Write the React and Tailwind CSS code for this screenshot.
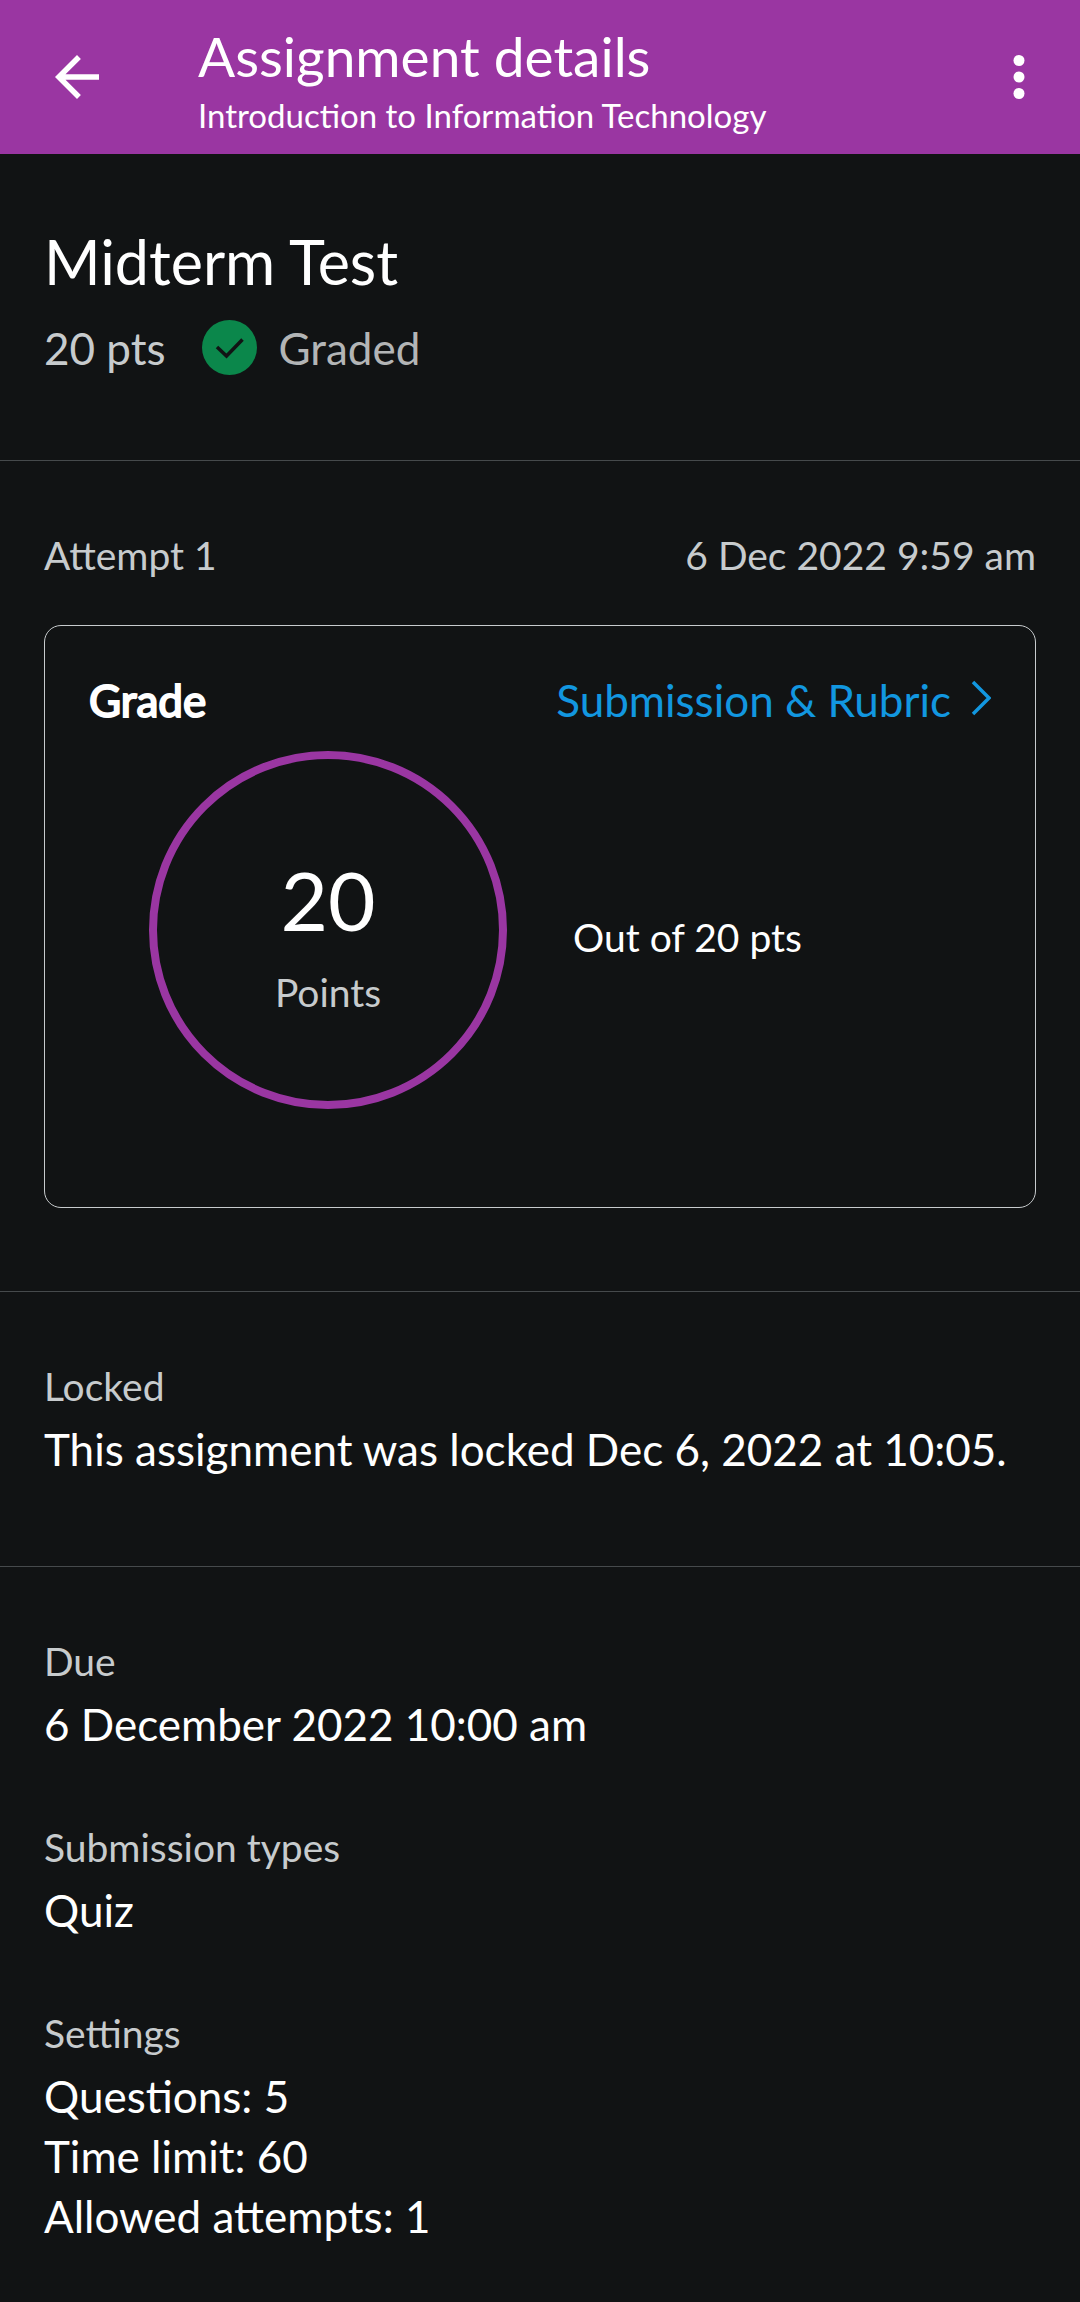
function Section({ className = "", children }) {
  return (
    <section className={`border-b border-[#464a4c] px-11 ${className}`}>
      {children}
    </section>
  );
}

function Field({ label, lines }) {
  return (
    <div className="flex flex-col gap-[10px]">
      <dt className="text-[39px] leading-[46px] text-[#c7cbcd]">{label}</dt>
      <dd className="text-[44px] leading-[60px] text-white">
        {lines.map((line) => (
          <p key={line}>{line}</p>
        ))}
      </dd>
    </div>
  );
}

export default function App() {
  return (
    <div className="min-h-screen bg-[#111314] font-['Lato',sans-serif] text-white">
      <header className="flex items-start bg-[#9a36a2] pr-7 pl-11">
        <button type="button" aria-label="Back" className="my-11 size-[66px] shrink-0">
          <svg viewBox="0 0 24 24" className="size-full" fill="currentColor" aria-hidden="true">
            <path d="M20 11H7.83l5.59-5.59L12 4l-8 8 8 8 1.41-1.41L7.83 13H20v-2z" />
          </svg>
        </button>
        <div className="ml-[88px] min-w-0 flex-1 pt-[23px]">
          <h1 className="text-[55px] leading-[66px]">Assignment details</h1>
          <p className="text-[33px] leading-[52px]">Introduction to Information Technology</p>
        </div>
        <button type="button" aria-label="More options" className="my-11 size-[66px] shrink-0">
          <svg viewBox="0 0 24 24" className="size-full" fill="currentColor" aria-hidden="true">
            <circle cx="12" cy="6" r="2" />
            <circle cx="12" cy="12" r="2" />
            <circle cx="12" cy="18" r="2" />
          </svg>
        </button>
      </header>

      <main>
        <Section className="pt-[72px] pb-[82px]">
          <h2 className="text-[61px] leading-[72px]">Midterm Test</h2>
          <div className="mt-5 flex items-center text-[44px] leading-[60px]">
            <span className="text-[#c7cbcd]">20 pts</span>
            <svg viewBox="0 0 55 55" className="mb-0.5 ml-9 size-[55px]" aria-hidden="true">
              <circle cx="27.5" cy="27.5" r="27.5" fill="#0b874b" />
              <path d="M15 27l9.5 9L40.500 19.500" fill="none" stroke="#111314" strokeWidth="3.5" />
            </svg>
            <span className="ml-[22px] text-[#b3b5b6]">Graded</span>
          </div>
        </Section>

        <Section className="pt-[71px] pb-[83px]">
          <div className="flex justify-between text-[39px] leading-[46px] text-[#c7cbcd]">
            <span>Attempt 1</span>
            <time dateTime="2022-12-06T09:59">6 Dec 2022 9:59 am</time>
          </div>

          <article className="mt-[47px] rounded-[17px] border border-[#c7cbcd] px-11 pt-11 pb-[98px]">
            <div className="flex justify-between text-[44px] leading-[60px]">
              <h3 className="[-webkit-text-stroke:2px_white]">Grade</h3>
              <a href="#submission" className="flex items-center gap-5 text-[#1297e0]">
                Submission &amp; Rubric
                <svg viewBox="0 0 20 36" className="mb-1 h-9 w-5" fill="none" stroke="currentColor" strokeWidth="3.5" aria-hidden="true">
                  <path d="M2 2L18 18 2 34" />
                </svg>
              </a>
            </div>
            <div className="mt-[21px] flex items-center gap-[66px] pl-[60px]">
              <div className="flex size-[358px] flex-col items-center justify-center gap-[21px] rounded-full border-8 border-[#9a36a2] pt-1">
                <span className="text-[82px] leading-[98px]">20</span>
                <span className="text-[39px] leading-[46px] text-[#c7cbcd]">Points</span>
              </div>
              <p className="pt-3.5 text-[39px] leading-[46px]">Out of 20 pts</p>
            </div>
          </article>
        </Section>

        <Section className="pt-[71px] pb-[87px]">
          <dl>
            <Field label="Locked" lines={["This assignment was locked Dec 6, 2022 at 10:05."]} />
          </dl>
        </Section>

        <dl className="flex flex-col gap-[70px] px-11 pt-[71px] pb-14">
          <Field label="Due" lines={["6 December 2022 10:00 am"]} />
          <Field label="Submission types" lines={["Quiz"]} />
          <Field label="Settings" lines={["Questions: 5", "Time limit: 60", "Allowed attempts: 1"]} />
        </dl>
      </main>
    </div>
  );
}
